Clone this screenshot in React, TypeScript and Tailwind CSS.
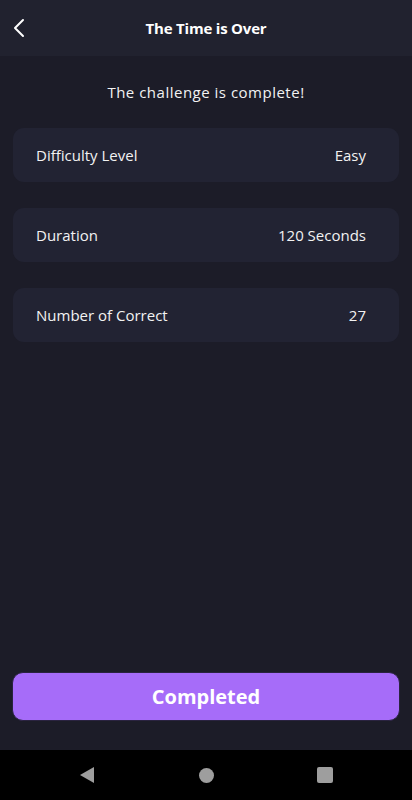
import React from 'react';

const rows = [
  { label: 'Difficulty Level', value: 'Easy' },
  { label: 'Duration', value: '120 Seconds' },
  { label: 'Number of Correct', value: '27' },
];

export default function App() {
  return (
    <div
      className="w-[412px] h-[800px] flex flex-col bg-[#1c1c28] text-white"
      style={{ fontFamily: '"Open Sans", "Noto Sans", sans-serif' }}
    >
      <header className="h-[56px] bg-[#21222f] flex items-center relative shrink-0">
        <button className="absolute left-[9px] top-[17px] w-[22px] h-[22px] flex items-center justify-center">
          <svg width="22" height="22" viewBox="0 0 22 22" fill="none">
            <path d="M14 3 L6 11 L14 19" stroke="white" strokeWidth="2" strokeLinecap="round" strokeLinejoin="round" />
          </svg>
        </button>
        <h1 className="w-full text-center text-[15px] font-bold tracking-[-0.2px]">The Time is Over</h1>
      </header>

      <main className="flex-1 flex flex-col px-[13px]">
        <p className="text-center text-[15px] mt-[25px] leading-[22px] tracking-[0.5px] text-[#f2f2f2]">
          The challenge is complete!
        </p>
        <div className="flex flex-col gap-[26px] mt-[25px]">
          {rows.map((r) => (
            <div
              key={r.label}
              className="h-[54px] rounded-[11px] bg-[#222333] flex items-center justify-between pl-[23px] pr-[33px] text-[15px] text-[#f2f2f2]"
            >
              <span>{r.label}</span>
              <span>{r.value}</span>
            </div>
          ))}
        </div>
        <div className="flex-1" />
        <button className="h-[49px] mb-[29px] -mx-[1px] rounded-[11px] bg-[#a66cf9] border border-[#2a2340] text-white text-[20px] font-bold">
          Completed
        </button>
      </main>

      <nav className="h-[50px] bg-black flex items-center justify-center gap-[79px] shrink-0">
        <div className="w-[40px] flex justify-center">
          <svg width="16" height="18" viewBox="0 0 16 18">
            <path d="M15 1 L15 17 L1 9 Z" fill="#9e9e9e" />
          </svg>
        </div>
        <div className="w-[40px] flex justify-center">
          <div className="w-[15px] h-[15px] rounded-full bg-[#9e9e9e]" />
        </div>
        <div className="w-[40px] flex justify-center">
          <div className="w-[16px] h-[16px] rounded-[2px] bg-[#9e9e9e]" />
        </div>
      </nav>
    </div>
  );
}
